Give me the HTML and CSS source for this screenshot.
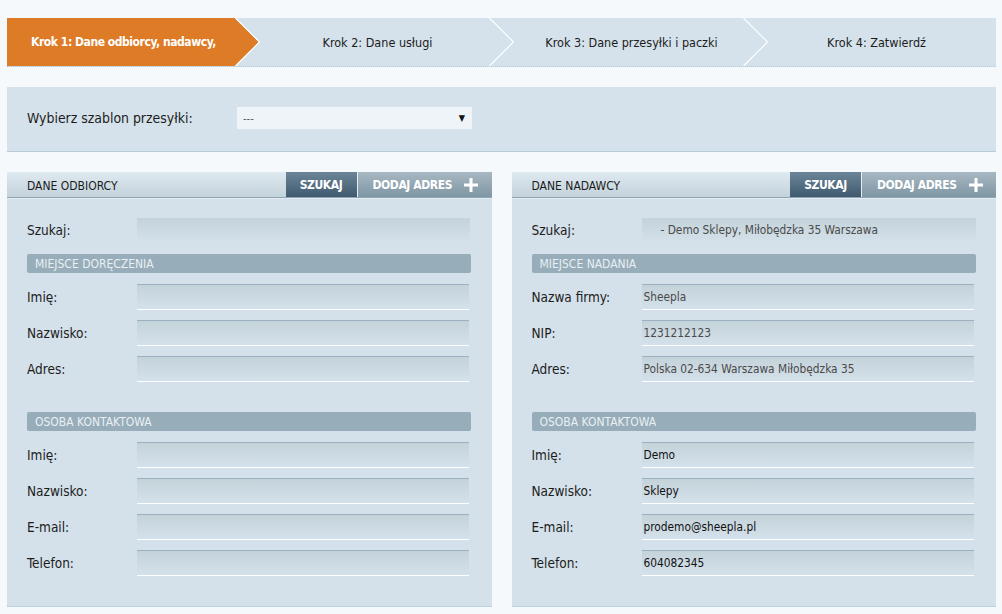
FILE: index.html
```html
<!DOCTYPE html>
<html lang="pl">
<head>
<meta charset="utf-8">
<title>Krok 1</title>
<link rel="stylesheet" href="styles.css">
</head>
<body>
<div class="page">
  <nav class="steps">
    <div class="step active"><span class="step-label">Krok 1: Dane odbiorcy, nadawcy,</span><svg class="chev" width="26" height="48" viewBox="0 0 26 48"><polygon class="chev-fill" points="0,0 24,24 0,48"/><polyline points="0.5,0 24.5,24 0.5,48" fill="none" stroke="#fff" stroke-width="1.2"/></svg></div>
    <div class="step"><span class="step-label">Krok 2: Dane usługi</span><svg class="chev" width="26" height="48" viewBox="0 0 26 48"><polyline points="0.5,0 24.5,24 0.5,48" fill="none" stroke="#fff" stroke-width="1.2"/></svg></div>
    <div class="step"><span class="step-label">Krok 3: Dane przesyłki i paczki</span><svg class="chev" width="26" height="48" viewBox="0 0 26 48"><polyline points="0.5,0 24.5,24 0.5,48" fill="none" stroke="#fff" stroke-width="1.2"/></svg></div>
    <div class="step last"><span class="step-label">Krok 4: Zatwierdź</span></div>
  </nav>

  <div class="template">
    <span class="template-label">Wybierz szablon przesyłki:</span>
    <div class="select"><span>---</span><span class="caret">▼</span></div>
  </div>

  <div class="panels">
    <section class="panel">
      <header class="panel-head">
        <span class="panel-title">DANE ODBIORCY</span>
        <span class="btn btn-dark">SZUKAJ</span>
        <span class="btn btn-light">DODAJ ADRES <svg class="plus" width="14" height="14" viewBox="0 0 14 14"><rect x="5.5" y="0" width="3" height="14" fill="#fff"/><rect x="0" y="5.5" width="14" height="3" fill="#fff"/></svg></span>
      </header>
      <div class="panel-body">
        <div class="row row-search"><span class="label">Szukaj:</span><div class="field search"></div></div>
        <div class="section">MIEJSCE DORĘCZENIA</div>
        <div class="row"><span class="label">Imię:</span><div class="field"></div></div>
        <div class="row"><span class="label">Nazwisko:</span><div class="field"></div></div>
        <div class="row"><span class="label">Adres:</span><div class="field"></div></div>
        <div class="section section-gap">OSOBA KONTAKTOWA</div>
        <div class="row"><span class="label">Imię:</span><div class="field"></div></div>
        <div class="row"><span class="label">Nazwisko:</span><div class="field"></div></div>
        <div class="row"><span class="label">E-mail:</span><div class="field"></div></div>
        <div class="row"><span class="label">Telefon:</span><div class="field"></div></div>
      </div>
    </section>

    <section class="panel">
      <header class="panel-head">
        <span class="panel-title">DANE NADAWCY</span>
        <span class="btn btn-dark">SZUKAJ</span>
        <span class="btn btn-light">DODAJ ADRES <svg class="plus" width="14" height="14" viewBox="0 0 14 14"><rect x="5.5" y="0" width="3" height="14" fill="#fff"/><rect x="0" y="5.5" width="14" height="3" fill="#fff"/></svg></span>
      </header>
      <div class="panel-body">
        <div class="row row-search"><span class="label">Szukaj:</span><div class="field search wide"><span class="value search-value">- Demo Sklepy, Miłobędzka 35 Warszawa</span></div></div>
        <div class="section">MIEJSCE NADANIA</div>
        <div class="row"><span class="label">Nazwa firmy:</span><div class="field"><span class="value muted">Sheepla</span></div></div>
        <div class="row"><span class="label">NIP:</span><div class="field"><span class="value muted">1231212123</span></div></div>
        <div class="row"><span class="label">Adres:</span><div class="field"><span class="value muted">Polska 02-634 Warszawa Miłobędzka 35</span></div></div>
        <div class="section section-gap">OSOBA KONTAKTOWA</div>
        <div class="row"><span class="label">Imię:</span><div class="field"><span class="value">Demo</span></div></div>
        <div class="row"><span class="label">Nazwisko:</span><div class="field"><span class="value">Sklepy</span></div></div>
        <div class="row"><span class="label">E-mail:</span><div class="field"><span class="value">prodemo@sheepla.pl</span></div></div>
        <div class="row"><span class="label">Telefon:</span><div class="field"><span class="value">604082345</span></div></div>
      </div>
    </section>
  </div>
</div>
</body>
</html>
```
FILE: styles.css
```css
* { box-sizing: border-box; }

html, body {
  margin: 0;
  padding: 0;
  background: #f5f9fc;
}

body {
  font-family: "DejaVu Sans Condensed", "DejaVu Sans", sans-serif;
  font-size: 13px;
  color: #1c1c1c;
}

.page {
  padding: 18px 6px 0 7px;
}

/* ---------- steps ---------- */
.steps {
  display: flex;
  height: 49px;
  background: #d5e2eb;
  border-bottom: 1px dotted #b3c7d4;
}

.step {
  position: relative;
  width: 254px;
  flex: none;
  display: flex;
  align-items: center;
  justify-content: center;
  padding-right: 21px;
  font-size: 12.5px;
  color: #1c1c1c;
}

.step.last {
  flex: 1;
  width: auto;
  padding-right: 12px;
}

.step.active {
  background: linear-gradient(to right, #dd7b26 calc(100% - 26px), transparent 0);
  color: #fff;
  font-weight: bold;
  font-size: 12px;
  letter-spacing: -0.45px;
}

.chev {
  position: absolute;
  right: 0;
  top: 0;
  display: block;
}

.chev-fill { fill: #dd7b26; }

/* ---------- template ---------- */
.template {
  margin-top: 20px;
  height: 65px;
  background: #d5e2eb;
  border-bottom: 1px solid #b7cbd8;
  display: flex;
  align-items: center;
  padding: 0 20px 2px 20px;
}

.template-label {
  width: 210px;
  flex: none;
  font-size: 13.9px;
}

.select {
  width: 235px;
  height: 22px;
  background: #eef4f8;
  display: flex;
  align-items: center;
  justify-content: space-between;
  padding: 0 6px;
  font-size: 11px;
  color: #555;
}

.caret {
  font-size: 9px;
  color: #111;
  margin-right: 1px;
}

/* ---------- panels ---------- */
.panels {
  margin-top: 20px;
  display: flex;
  gap: 20px;
}

.panel {
  flex: 1;
  background: #d4e1ea;
  border-bottom: 1px solid #b9d3e6;
}

.panel-head {
  display: flex;
  height: 26px;
  background: linear-gradient(#dfe9f0, #c3d2db);
  border-bottom: 1px solid #8fa5b3;
}

.panel-title {
  flex: 1;
  display: flex;
  align-items: center;
  padding: 2px 0 0 20px;
  font-size: 12px;
  color: #1c1c1c;
}

.btn {
  display: flex;
  align-items: center;
  justify-content: center;
  height: 100%;
  color: #fff;
  font-weight: bold;
  font-size: 12px;
  letter-spacing: -0.4px;
  padding-top: 1px;
}

.btn-dark {
  width: 72px;
  background: linear-gradient(#6c8598, #3f5a6f);
  border-right: 1px solid #e6eef3;
}

.btn-light {
  width: 134px;
  background: linear-gradient(#a7b8c2, #7f96a4);
  justify-content: flex-start;
  padding-left: 15px;
}

.plus {
  margin-left: 12px;
  margin-top: -1px;
}

.panel-body {
  border-top: 1px solid #e3ecf2;
  padding: 19px 20px 30px 20px;
}

.row {
  display: flex;
  align-items: center;
  margin-bottom: 10px;
}

.row-search {
  margin-bottom: 12px;
}

.label {
  width: 110px;
  flex: none;
  font-size: 13.5px;
}

.field {
  width: 332px;
  height: 26px;
  border-top: 1px solid #9bb1bf;
  border-bottom: 1px solid #fdfeff;
  background: linear-gradient(#c4d2da, #d4e1ea);
  display: flex;
  align-items: center;
  padding: 0 2px;
}

.field.search {
  height: 24px;
  border: 0;
  width: 333px;
}

.field.search.wide { width: 334px; }

.value {
  font-size: 11.8px;
  color: #111;
}

.value.muted { color: #4a4a4a; }

.search-value {
  color: #4a4a4a;
  padding-left: 17px;
}

.section {
  height: 19px;
  width: 444px;
  border-radius: 2px;
  background: #97adb9;
  color: #e9f0f4;
  font-size: 12px;
  padding: 1px 0 0 8px;
  display: flex;
  align-items: center;
  margin-bottom: 11px;
}

.section-gap {
  margin-top: 30px;
}

.panel .row:last-child { margin-bottom: 0; }
```
